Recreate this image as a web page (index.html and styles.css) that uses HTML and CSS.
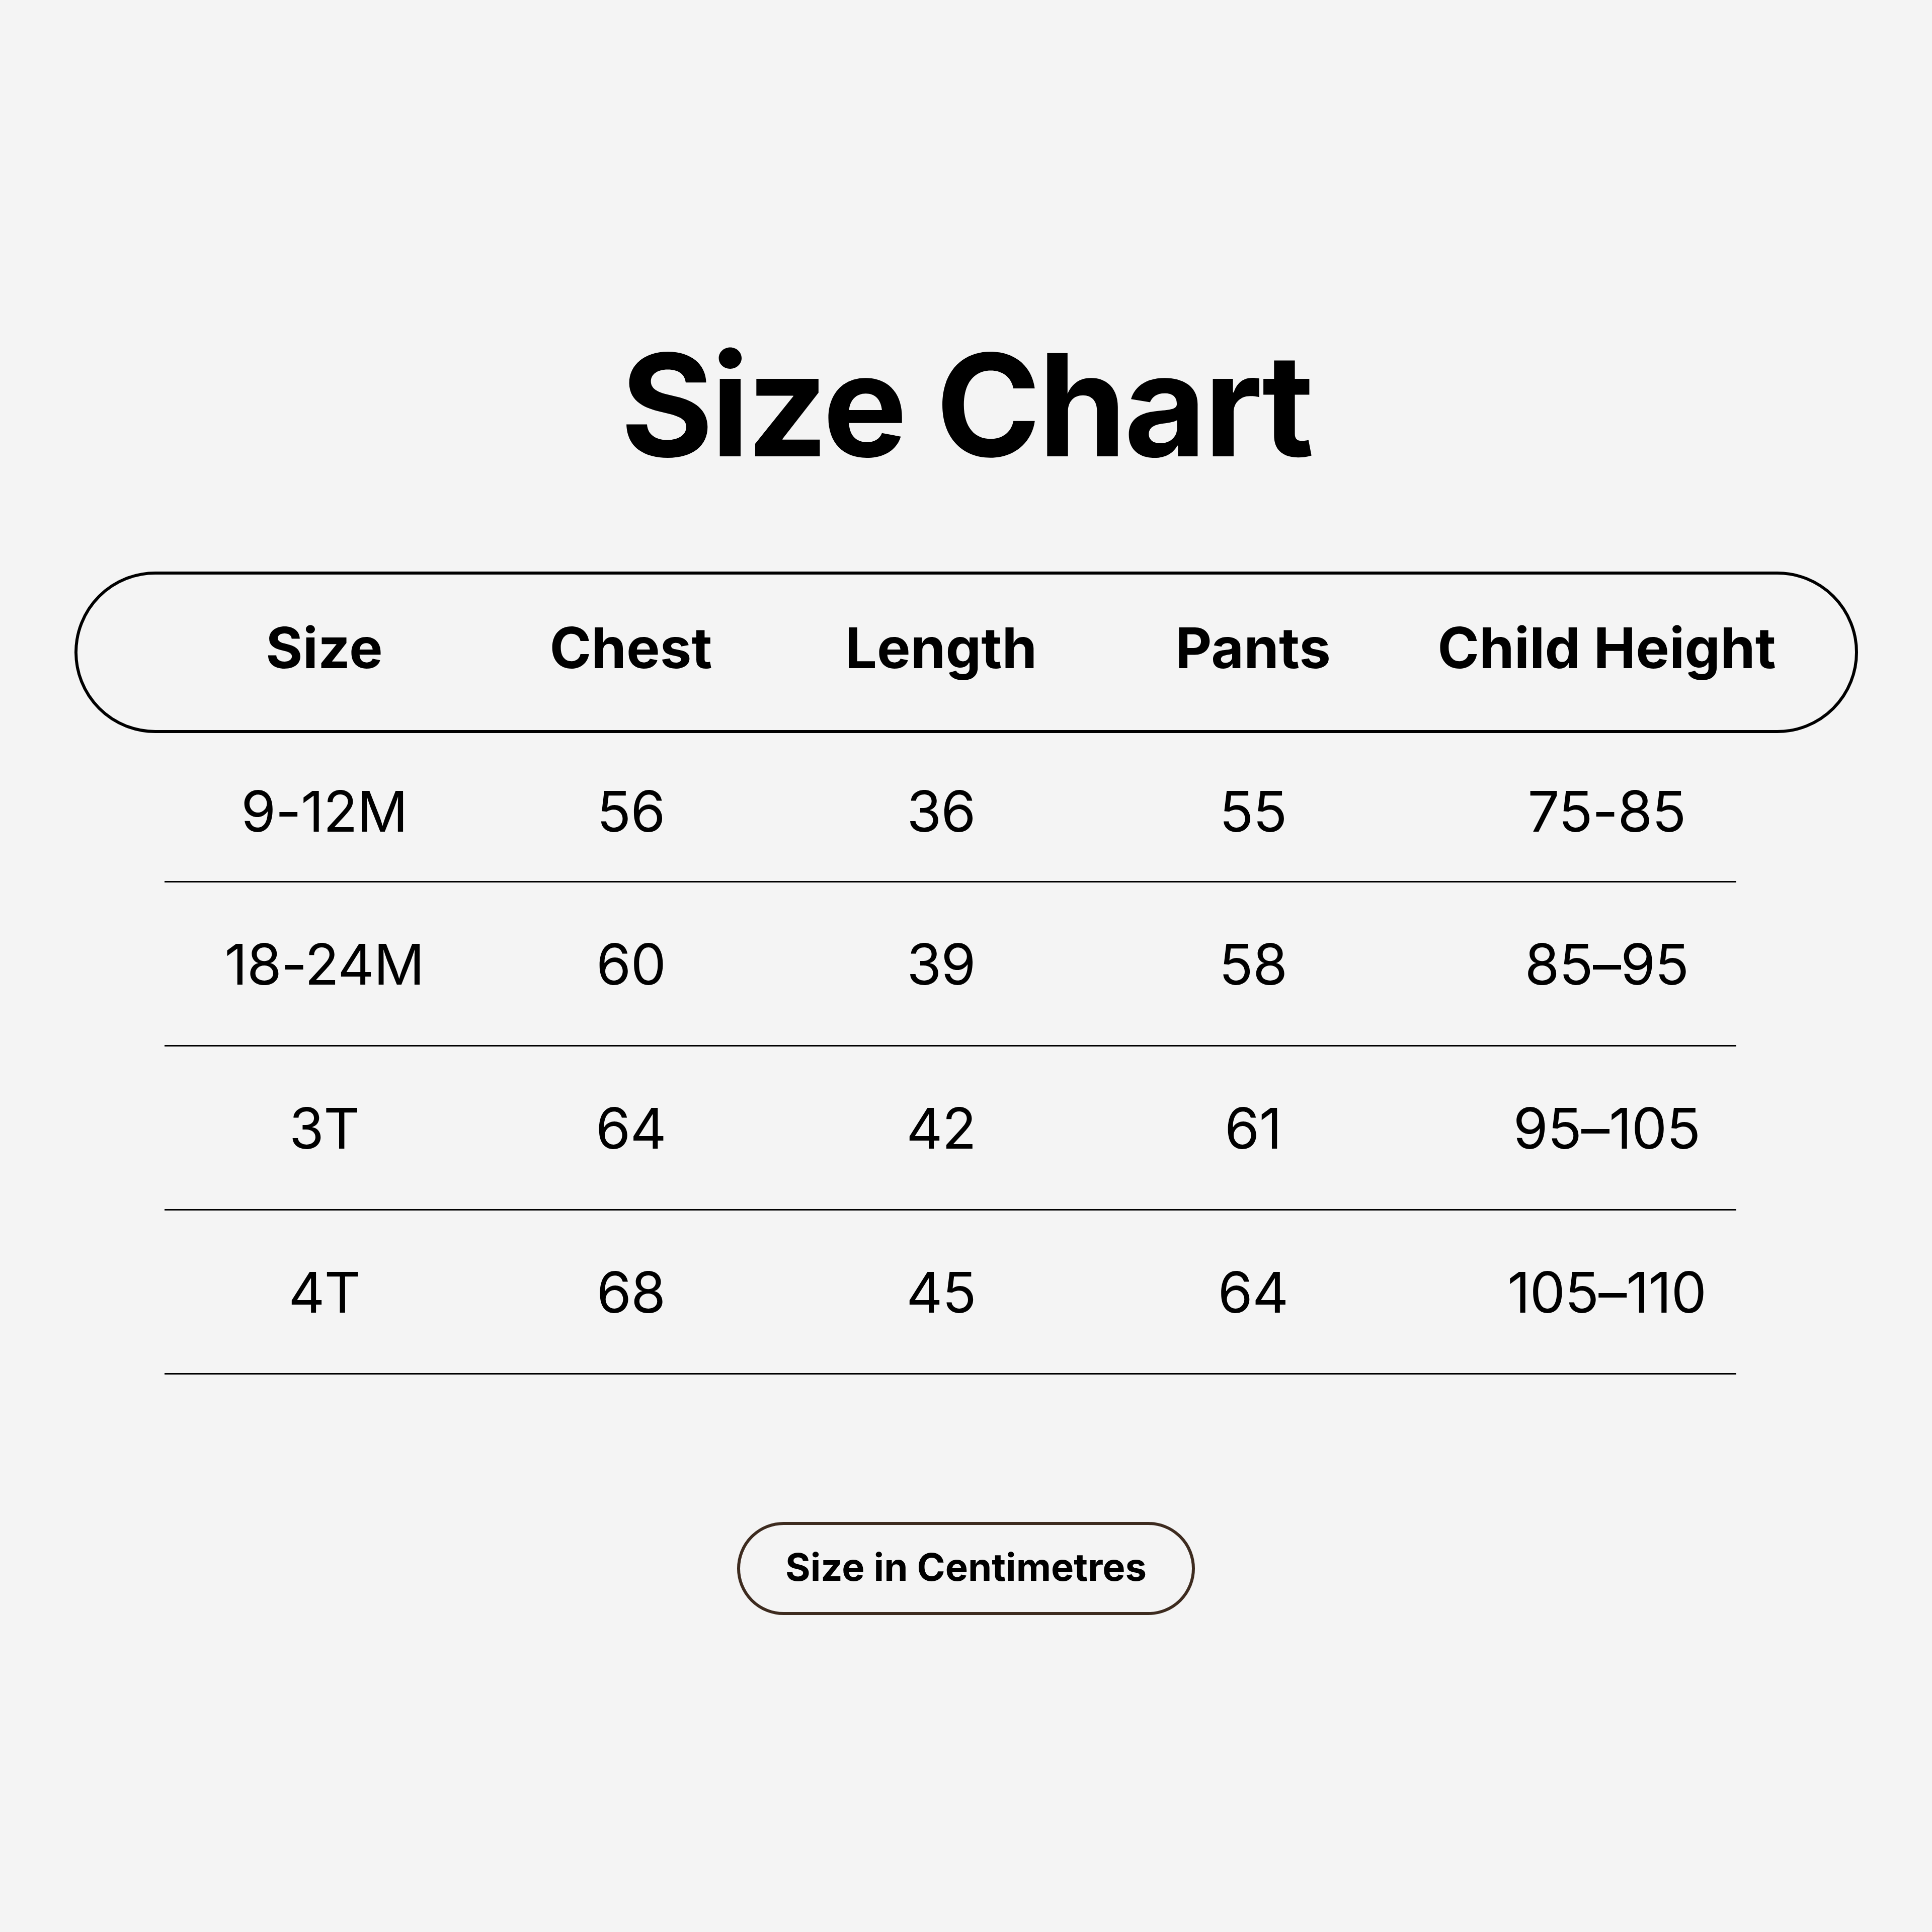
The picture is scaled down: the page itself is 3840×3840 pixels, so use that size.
FILE: index.html
```html
<!DOCTYPE html>
<html lang="en">
<head>
<meta charset="utf-8">
<title>Size Chart</title>
<link rel="stylesheet" href="styles.css">
</head>
<body>
<main class="page">
  <h1 class="title">Size Chart</h1>
  <section class="chart">
    <div class="head">
      <span class="cell">Size</span>
      <span class="cell">Chest</span>
      <span class="cell">Length</span>
      <span class="cell">Pants</span>
      <span class="cell">Child Height</span>
    </div>
    <div class="row first">
      <span class="cell">9-12M</span>
      <span class="cell">56</span>
      <span class="cell">36</span>
      <span class="cell">55</span>
      <span class="cell">75-85</span>
    </div>
    <div class="row">
      <span class="cell">18-24M</span>
      <span class="cell">60</span>
      <span class="cell">39</span>
      <span class="cell">58</span>
      <span class="cell">85–95</span>
    </div>
    <div class="row">
      <span class="cell">3T</span>
      <span class="cell">64</span>
      <span class="cell">42</span>
      <span class="cell">61</span>
      <span class="cell">95–105</span>
    </div>
    <div class="row">
      <span class="cell">4T</span>
      <span class="cell">68</span>
      <span class="cell">45</span>
      <span class="cell">64</span>
      <span class="cell">105–110</span>
    </div>
  </section>
  <div class="unit">Size in Centimetres</div>
</main>
</body>
</html>
```
FILE: styles.css
```css
* { box-sizing: border-box; }
html, body {
  margin: 0;
  padding: 0;
  background: #f4f4f4;
}
body {
  width: 3840px;
  height: 3840px;
  font-family: Inter, "Liberation Sans", sans-serif;
  color: #000;
}
.page {
  display: flex;
  flex-direction: column;
  align-items: center;
  padding-top: 664px;
}
.title {
  margin: 0;
  font-size: 282px;
  line-height: 282px;
  font-weight: 700;
  letter-spacing: -5px;
}
.chart {
  margin-top: 190px;
  width: 3545px;
  display: flex;
  flex-direction: column;
}
.head {
  height: 321px;
  border: 6px solid #000;
  border-radius: 161px;
  padding-top: 89px;
  padding-left: 188px;
  display: grid;
  grid-template-columns: 606px 613px 620px 620px 786px;
  align-content: start;
  font-size: 112px;
  line-height: 112px;
  font-weight: 700;
}
.cell {
  text-align: center;
  white-space: nowrap;
}
.row {
  margin-left: 179px;
  margin-right: 242px;
  height: 326px;
  border-bottom: 3px solid #000;
  padding-top: 106px;
  padding-left: 15px;
  display: grid;
  grid-template-columns: 606px 613px 620px 620px 786px;
  align-content: start;
  font-size: 112px;
  line-height: 112px;
  font-weight: 400;
  letter-spacing: -1px;
}
.row.first {
  height: 297px;
  padding-top: 99px;
}
.unit {
  margin-top: 293px;
  width: 910px;
  height: 185px;
  border: 6px solid #3d2b1f;
  border-radius: 93px;
  padding-top: 45px;
  text-align: center;
  font-size: 76px;
  line-height: 76px;
  font-weight: 700;
}
```
